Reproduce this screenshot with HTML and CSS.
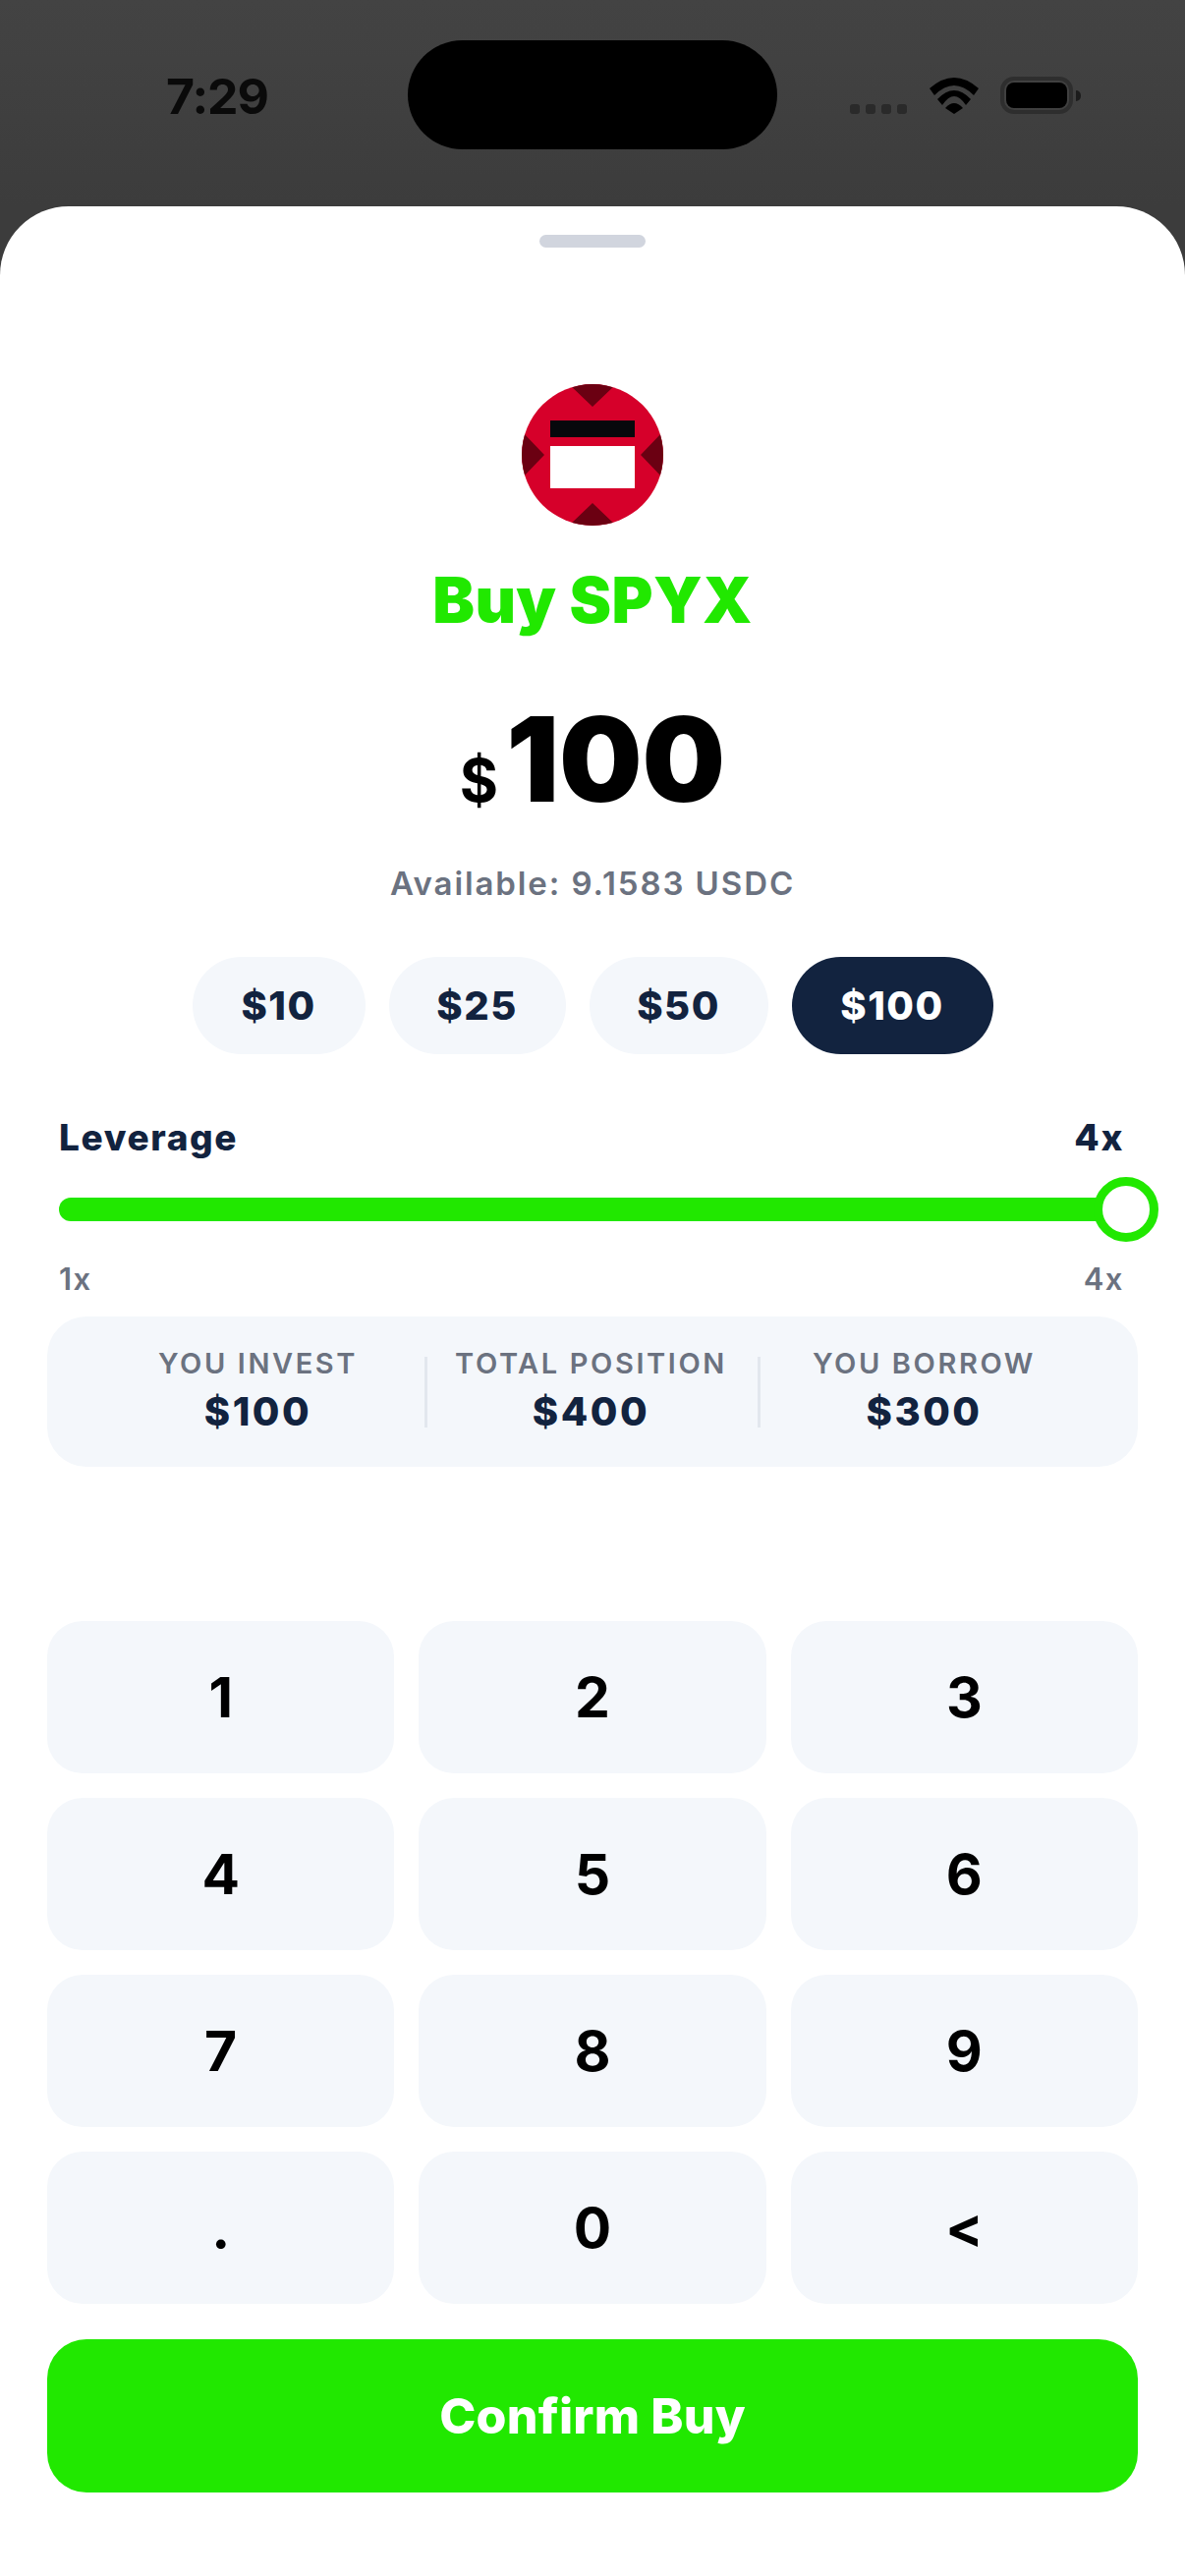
FILE: index.html

```html
<!DOCTYPE html>
<html lang="en">
<head>
    <meta charset="UTF-8">
    <meta name="viewport" content="width=device-width, initial-scale=1.0">
    <title>Buy SPYX</title>
    <link rel="stylesheet" href="styles.css">
</head>
<body>
    <div class="status-bar">
        <span class="time">7:29</span>
        <div class="island"></div>
        <div class="status-icons">
            <div class="signal"><i></i><i></i><i></i><i></i></div>
            <svg class="wifi" width="50" height="37" viewBox="0 0 50 37">
                <path d="M0 11 Q25 -11 50 11 L45 18 Q25 -2 5 18Z" fill="#000"/>
                <path d="M8 22 Q25 4 42 22 L37 28 Q25 10 13 28Z" fill="#000"/>
                <path d="M16 31 Q25 21 34 31 L25 37Z" fill="#000"/>
            </svg>
            <div class="battery"><div class="battery-fill"></div></div>
        </div>
    </div>

    <div class="sheet">
        <div class="handle"></div>

        <svg class="token" width="144" height="144" viewBox="0 0 144 144">
            <clipPath id="token-clip"><circle cx="72" cy="72" r="72"/></clipPath>
            <g clip-path="url(#token-clip)">
                <rect width="144" height="144" fill="#d6002a"/>
                <path d="M48 0 L72 23 L96 0Z M48 144 L72 121 L96 144Z M0 48 L23 72 L0 96Z M144 48 L121 72 L144 96Z" fill="#6b0012"/>
                <rect x="29" y="37" width="86" height="17" fill="#07080c"/>
                <rect x="29" y="63" width="86" height="43" fill="#fff"/>
            </g>
        </svg>
        <h1 class="title">Buy SPYX</h1>

        <div class="amount"><span class="currency">$</span><span class="value">100</span></div>
        <p class="available">Available: 9.1583 USDC</p>

        <div class="chips">
            <button class="chip chip-10">$10</button>
            <button class="chip chip-25">$25</button>
            <button class="chip chip-50">$50</button>
            <button class="chip chip-100 active">$100</button>
        </div>

        <div class="leverage">
            <div class="leverage-head">
                <span>Leverage</span>
                <span>4x</span>
            </div>
            <div class="track">
                <div class="thumb"></div>
            </div>
            <div class="leverage-scale">
                <span>1x</span>
                <span>4x</span>
            </div>
        </div>

        <div class="stats">
            <div class="stat">
                <span class="stat-label">YOU INVEST</span>
                <span class="stat-value">$100</span>
            </div>
            <div class="stat">
                <span class="stat-label">TOTAL POSITION</span>
                <span class="stat-value">$400</span>
            </div>
            <div class="stat">
                <span class="stat-label">YOU BORROW</span>
                <span class="stat-value">$300</span>
            </div>
        </div>

        <div class="keypad">
            <button class="key">1</button>
            <button class="key">2</button>
            <button class="key">3</button>
            <button class="key">4</button>
            <button class="key">5</button>
            <button class="key">6</button>
            <button class="key">7</button>
            <button class="key">8</button>
            <button class="key">9</button>
            <button class="key">.</button>
            <button class="key">0</button>
            <button class="key">&lt;</button>
        </div>

        <button class="confirm">Confirm Buy</button>
    </div>
</body>
</html>
```

FILE: styles.css

```css
* {
    margin: 0;
    padding: 0;
    box-sizing: border-box;
}

body {
    width: 1206px;
    height: 2622px;
    overflow: hidden;
    font-family: Inter, 'Liberation Sans', sans-serif;
    background: linear-gradient(180deg, #434343 0%, #3c3c3c 210px);
}

button {
    font-family: inherit;
    border: none;
}

.status-bar {
    height: 210px;
    position: relative;
    display: flex;
    align-items: flex-start;
    justify-content: space-between;
    padding: 70px 114px 0 169px;
}

.time {
    font-size: 50px;
    line-height: 56px;
    font-weight: 700;
    letter-spacing: -1px;
    color: #0a0a0a;
}

.island {
    position: absolute;
    left: 415px;
    top: 41px;
    width: 376px;
    height: 111px;
    border-radius: 56px;
    background: #000;
}

.status-icons {
    display: flex;
    align-items: flex-end;
    padding-top: 8px;
}

.signal {
    display: flex;
    gap: 6px;
    margin-right: 23px;
}

.signal i {
    width: 10px;
    height: 10px;
    border-radius: 3px;
    background: #2a2a2a;
}

.wifi {
    margin-right: 22px;
}

.battery {
    position: relative;
    width: 74px;
    height: 38px;
    padding: 2px;
    border: 4px solid #2e2e2e;
    border-radius: 14px;
}

.battery::after {
    content: '';
    position: absolute;
    right: -12px;
    top: 10px;
    width: 5px;
    height: 11px;
    border-radius: 0 6px 6px 0;
    background: #1c1c1c;
}

.battery-fill {
    height: 100%;
    border-radius: 8px;
    background: #000;
}

.sheet {
    height: 2412px;
    padding: 29px 48px 0;
    background: #fff;
    border-radius: 70px 70px 0 0;
    display: flex;
    flex-direction: column;
    align-items: center;
}

.handle {
    width: 108px;
    height: 13px;
    border-radius: 7px;
    background: #d1d5de;
}

.token {
    display: block;
    margin-top: 139px;
}

.title {
    margin-top: 40px;
    font-size: 64px;
    line-height: 72px;
    font-weight: 900;
    letter-spacing: 0.4px;
    color: #21e800;
}

.amount {
    display: flex;
    align-items: baseline;
    justify-content: center;
    margin-top: 58px;
    color: #000;
}

.currency {
    font-size: 60px;
    font-weight: 700;
    margin-right: 8px;
}

.value {
    font-size: 119px;
    line-height: 136px;
    font-weight: 900;
}

.available {
    margin-top: 36px;
    font-size: 33px;
    line-height: 44px;
    font-weight: 600;
    letter-spacing: 1.9px;
    color: #6b7280;
}

.chips {
    display: flex;
    gap: 24px;
    margin-top: 53px;
}

.chip {
    height: 99px;
    border-radius: 50px;
    font-size: 40px;
    font-weight: 800;
    letter-spacing: 1.5px;
    color: #12233f;
    background: #f4f7fb;
}

.chip-10 { width: 176px; }
.chip-25 { width: 180px; }
.chip-50 { width: 182px; }
.chip-100 { width: 205px; }

.chip.active {
    color: #fff;
    background: #12233f;
}

.leverage {
    width: 100%;
    margin-top: 63px;
}

.leverage-head {
    display: flex;
    justify-content: space-between;
    padding: 0 14px 0 12px;
    font-size: 37px;
    line-height: 44px;
    font-weight: 800;
    letter-spacing: 1.6px;
    color: #12233f;
}

.track {
    position: relative;
    height: 24px;
    margin: 39px 0 0 12px;
    width: 1086px;
    border-radius: 12px;
    background: #21e800;
}

.thumb {
    position: absolute;
    right: -33px;
    top: -21px;
    width: 66px;
    height: 66px;
    border: 9px solid #21e800;
    border-radius: 50%;
    background: #fff;
}

.leverage-scale {
    display: flex;
    justify-content: space-between;
    padding: 0 14px 0 12px;
    margin-top: 39px;
    font-size: 31px;
    line-height: 40px;
    font-weight: 600;
    letter-spacing: 1.5px;
    color: #6b7280;
}

.stats {
    width: 100%;
    height: 153px;
    margin-top: 18px;
    display: grid;
    grid-template-columns: repeat(3, 339px);
    align-items: start;
    padding: 30px 0 0 45px;
    border-radius: 40px;
    background: #f4f7fb;
}

.stat {
    position: relative;
    display: flex;
    flex-direction: column;
    align-items: center;
}

.stat + .stat::before {
    content: '';
    position: absolute;
    left: 0;
    top: 11px;
    width: 3px;
    height: 72px;
    background: #e2e7ee;
}

.stat-label {
    margin-bottom: 8px;
    font-size: 29px;
    line-height: 36px;
    font-weight: 600;
    letter-spacing: 2.6px;
    color: #6b7280;
}

.stat-value {
    font-size: 40px;
    line-height: 46px;
    font-weight: 800;
    letter-spacing: 2.5px;
    color: #12233f;
}

.keypad {
    width: 100%;
    margin-top: 157px;
    display: grid;
    grid-template-columns: repeat(3, 1fr);
    gap: 25px;
}

.key {
    height: 155px;
    border-radius: 36px;
    font-size: 57px;
    font-weight: 700;
    color: #000;
    background: #f4f7fb;
}

.confirm {
    width: 100%;
    height: 156px;
    margin-top: 36px;
    border-radius: 40px;
    font-size: 50px;
    font-weight: 800;
    letter-spacing: 0.2px;
    color: #fff;
    background: #21e800;
}
```
